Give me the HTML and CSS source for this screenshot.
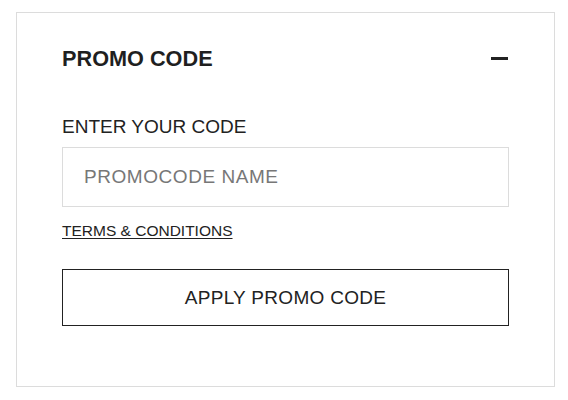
FILE: index.html
```html
<!DOCTYPE html>
<html lang="en">
<head>
<meta charset="utf-8">
<title>Promo code</title>
<link rel="stylesheet" href="styles.css">
</head>
<body>
<div class="page">
  <section class="promo">
    <div class="promo-head">
      <h2 class="promo-title">PROMO CODE</h2>
      <button class="collapse" type="button" aria-label="Collapse"><span class="minus"></span></button>
    </div>
    <label class="promo-label" for="code">ENTER YOUR CODE</label>
    <input class="promo-input" id="code" type="text" placeholder="PROMOCODE NAME">
    <a class="terms" href="#">TERMS &amp; CONDITIONS</a>
    <button class="apply" type="button">APPLY PROMO CODE</button>
  </section>
</div>
</body>
</html>
```
FILE: styles.css
```css
* { box-sizing: border-box; }
html, body { margin: 0; padding: 0; background: #fff; }
body {
  font-family: "Liberation Sans", Arial, sans-serif;
  color: #222;
}
.page {
  padding: 12px 13px 0 16px;
}
.promo {
  border: 1px solid #dcdcdc;
  padding: 34px 45px 60px 45px;
  display: flex;
  flex-direction: column;
  height: 375px;
}
.promo-head {
  display: flex;
  align-items: center;
  justify-content: space-between;
  height: 24px;
}
.promo-title {
  margin: 0;
  font-size: 21.7px;
  line-height: 24px;
  font-weight: 700;
  color: #1f1f1f;
}
.collapse {
  border: 0;
  background: none;
  padding: 0;
  width: 18px;
  height: 24px;
  display: flex;
  align-items: center;
  justify-content: flex-end;
  margin-right: 1px;
  cursor: pointer;
}
.minus {
  display: block;
  width: 17px;
  height: 3px;
  background: #222;
  margin-top: -1px;
}
.promo-label {
  margin-top: 45px;
  font-size: 19px;
  line-height: 22px;
  color: #222;
}
.promo-input {
  margin-top: 9px;
  height: 60px;
  border: 1px solid #dcdcdc;
  padding: 0 21px;
  font-family: "Liberation Sans", Arial, sans-serif;
  font-size: 19px;
  letter-spacing: 0.55px;
  color: #222;
  outline: none;
}
.promo-input::placeholder { color: #777; opacity: 1; }
.terms {
  margin-top: 15px;
  align-self: flex-start;
  font-size: 15.5px;
  line-height: 18px;
  color: #222;
  text-decoration: underline;
  text-underline-offset: 2px;
}
.apply {
  margin-top: 29px;
  height: 57px;
  border: 1px solid #222;
  background: #fff;
  font-family: "Liberation Sans", Arial, sans-serif;
  font-size: 19px;
  letter-spacing: 0.3px;
  color: #222;
  cursor: pointer;
}
```
